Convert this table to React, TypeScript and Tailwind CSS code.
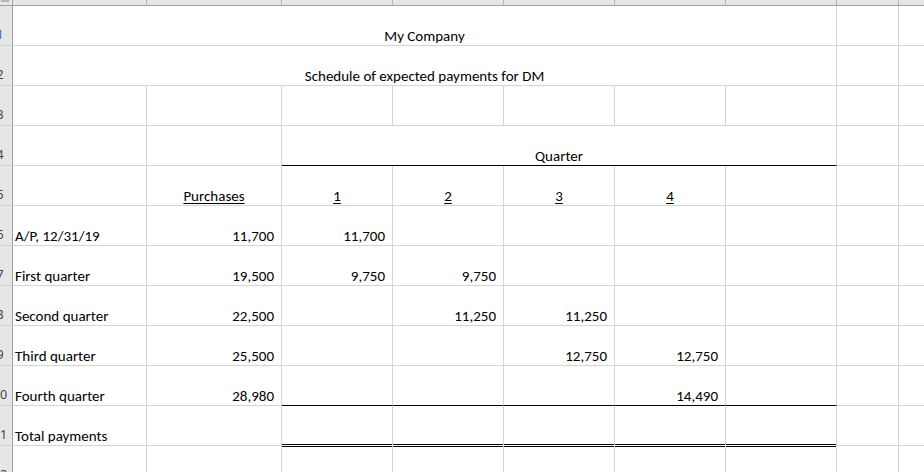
import React from "react";

const FONT = { fontFamily: "Carlito, Lato, 'Liberation Sans', sans-serif" };

type Row = {
  n: number;
  cells: string[]; // A..G
  kind?: "normal" | "b10" | "b11";
};

function RowHead({ n, blue }: { n: number; blue?: boolean }) {
  return (
    <div className="relative overflow-hidden bg-[#e6e6e6] border-r border-r-[#a0a0a0] border-b border-b-[#d0d0d0]">
      <div
        className={
          blue
            ? "absolute left-[-12px] w-[24px] bottom-[3px] text-center text-[12.5px] leading-[14px] text-[#1f6fd0]"
            : "absolute left-[-12px] w-[24px] bottom-[3px] text-center text-[12.5px] leading-[14px] text-[#444444]"
        }
        style={{ fontFamily: "'Noto Sans', 'DejaVu Sans', sans-serif" }}
      >
        {n}
      </div>
    </div>
  );
}

function G({ className = "" }: { className?: string }) {
  return <div className={"border-r border-b border-[#d4d4d4] " + className} />;
}

function LabelCell({ text }: { text: string }) {
  return (
    <div className="flex items-end pl-[2px] pb-0 border-r border-b border-[#d4d4d4] whitespace-nowrap text-[15px] leading-[17px] text-black">
      {text}
    </div>
  );
}

function NumCell({ text, variant }: { text: string; variant: "normal" | "b10" | "b11" }) {
  const cls =
    variant === "b10"
      ? "flex items-end justify-end pr-[7px] pb-0 border-r border-b border-r-[#d4d4d4] border-b-black whitespace-nowrap text-[15px] leading-[17px] text-black"
      : variant === "b11"
      ? "flex items-end justify-end pr-[7px] pb-0 border-r border-b border-r-[#d4d4d4] border-b-white shadow-[inset_0_-1px_0_#000,0_1px_0_#000] whitespace-nowrap text-[15px] leading-[17px] text-black"
      : "flex items-end justify-end pr-[7px] pb-0 border-r border-b border-[#d4d4d4] whitespace-nowrap text-[15px] leading-[17px] text-black";
  return <div className={cls}>{text}</div>;
}

const data: Row[] = [
  { n: 6, cells: ["A/P, 12/31/19", "11,700", "11,700", "", "", "", ""] },
  { n: 7, cells: ["First quarter", "19,500", "9,750", "9,750", "", "", ""] },
  { n: 8, cells: ["Second quarter", "22,500", "", "11,250", "11,250", "", ""] },
  { n: 9, cells: ["Third quarter", "25,500", "", "", "12,750", "12,750", ""] },
  { n: 10, cells: ["Fourth quarter", "28,980", "", "", "", "14,490", ""], kind: "b10" },
  { n: 11, cells: ["Total payments", "", "", "", "", "", ""], kind: "b11" },
];

export default function App() {
  return (
    <div className="w-[924px] h-[472px] overflow-hidden bg-white" style={FONT}>
      <div className="grid grid-cols-[13px_134px_135px_111px_111px_111px_111px_111px_62px_100px] grid-rows-[6px_repeat(12,40px)]">
        {/* column header strip */}
        <div className="bg-[#e6e6e6] border-r border-r-[#a0a0a0] border-b border-b-[#a0a0a0]">
          <div className="ml-[1px] h-[2px] w-[8px] bg-[#b4b4b4]" />
        </div>
        <div className="bg-[#e6e6e6] border-r border-r-[#b4b4b4] border-b border-b-[#a0a0a0]" />
        <div className="bg-[#e6e6e6] border-r border-r-[#b4b4b4] border-b border-b-[#a0a0a0]" />
        <div className="bg-[#e6e6e6] border-r border-r-[#b4b4b4] border-b border-b-[#a0a0a0]" />
        <div className="bg-[#e6e6e6] border-r border-r-[#b4b4b4] border-b border-b-[#a0a0a0]" />
        <div className="bg-[#e6e6e6] border-r border-r-[#b4b4b4] border-b border-b-[#a0a0a0]" />
        <div className="bg-[#e6e6e6] border-r border-r-[#b4b4b4] border-b border-b-[#a0a0a0]" />
        <div className="bg-[#e6e6e6] border-r border-r-[#b4b4b4] border-b border-b-[#a0a0a0]" />
        <div className="bg-[#e6e6e6] border-r border-r-[#b4b4b4] border-b border-b-[#a0a0a0]" />
        <div className="bg-[#e6e6e6] border-b border-b-[#a0a0a0]" />

        {/* row 1 */}
        <RowHead n={1} blue />
        <div className="col-span-7 flex items-end justify-center pb-0 border-r border-b border-[#d4d4d4] text-[15px] leading-[17px] text-black">
          My Company
        </div>
        <G />
        <G />

        {/* row 2 */}
        <RowHead n={2} />
        <div className="col-span-7 flex items-end justify-center pb-0 border-r border-b border-[#d4d4d4] text-[15px] leading-[17px] text-black">
          Schedule of expected payments for DM
        </div>
        <G />
        <G />

        {/* row 3 */}
        <RowHead n={3} />
        <G />
        <G />
        <G />
        <G />
        <G />
        <G />
        <G />
        <G />
        <G />

        {/* row 4 */}
        <RowHead n={4} />
        <G />
        <G />
        <div className="col-span-5 flex items-end justify-center pb-0 border-r border-b border-r-[#d4d4d4] border-b-black text-[15px] leading-[17px] text-black">
          Quarter
        </div>
        <G />
        <G />

        {/* row 5 */}
        <RowHead n={5} />
        <G />
        {["Purchases", "1", "2", "3", "4"].map((t) => (
          <div
            key={t}
            className="flex items-end justify-center pb-0 border-r border-b border-[#d4d4d4] text-[15px] leading-[17px] text-black"
          >
            <span className="underline underline-offset-[2px] decoration-1">{t}</span>
          </div>
        ))}
        <G />
        <G />
        <G />

        {data.map((r) => (
          <React.Fragment key={r.n}>
            <RowHead n={r.n} />
            <LabelCell text={r.cells[0]} />
            <NumCell text={r.cells[1]} variant="normal" />
            {r.cells.slice(2).map((c, i) => (
              <NumCell key={i} text={c} variant={r.kind ?? "normal"} />
            ))}
            <G />
            <G />
          </React.Fragment>
        ))}

        {/* row 12 */}
        <RowHead n={12} />
        <G />
        <G />
        <G />
        <G />
        <G />
        <G />
        <G />
        <G />
        <G />
      </div>
    </div>
  );
}
